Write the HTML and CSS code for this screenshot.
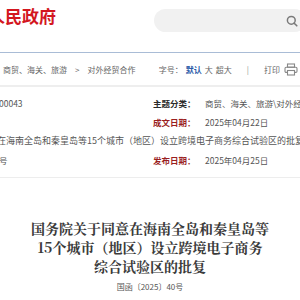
FILE: index.html
```html
<!DOCTYPE html>
<html lang="zh-CN">
<head>
<meta charset="utf-8">
<title>国务院关于同意在海南全岛和秦皇岛等15个城市（地区）设立跨境电子商务综合试验区的批复</title>
<link rel="stylesheet" href="styles.css">
</head>
<body>
<header class="top">
  <div class="logo">人民政府</div>
  <div class="search">
    <svg class="search-icon" viewBox="0 0 12 12" width="12" height="12" aria-hidden="true">
      <circle cx="5.3" cy="5.3" r="3.9" fill="none" stroke="#7a7a7a" stroke-width="1.5"/>
      <line x1="8.2" y1="8.2" x2="10.8" y2="10.8" stroke="#7a7a7a" stroke-width="1.6" stroke-linecap="round"/>
    </svg>
  </div>
</header>
<nav class="bar">
  <div class="crumbs">
    <span>商贸、海关、旅游</span>
    <span class="gt">&gt;</span>
    <span>对外经贸合作</span>
  </div>
  <div class="tools">
    <span>字号：</span><span class="active">默认</span><span>大</span><span>超大</span>
    <span class="sep">|</span>
    <span>打印</span>
    <svg class="printer" viewBox="0 0 14 13" width="14" height="13" aria-hidden="true">
      <rect x="3.5" y="1" width="7" height="3.2" fill="none" stroke="#888" stroke-width="1.1"/>
      <rect x="1" y="4.2" width="12" height="5.2" rx="1.2" fill="none" stroke="#888" stroke-width="1.1"/>
      <rect x="3.5" y="7.5" width="7" height="4.5" fill="#fff" stroke="#888" stroke-width="1.1"/>
    </svg>
  </div>
</nav>
<section class="info">
  <div class="cell left">00043</div>
  <div class="cell right"><b class="lbl dark">主题分类：</b><span class="val">商贸、海关、旅游\对外经贸合作</span></div>
  <div class="cell left"></div>
  <div class="cell right"><b class="lbl">成文日期：</b><span class="val">2025年04月22日</span></div>
  <div class="cell full">在海南全岛和秦皇岛等15个城市（地区）设立跨境电子商务综合试验区的批复</div>
  <div class="cell left">号</div>
  <div class="cell right"><b class="lbl">发布日期：</b><span class="val">2025年04月25日</span></div>
</section>
<article class="doc">
  <h1 class="title">国务院关于同意在海南全岛和秦皇岛等<br>15个城市（地区）设立跨境电子商务<br>综合试验区的批复</h1>
  <p class="docno">国函〔2025〕40号</p>
</article>
</body>
</html>
```
FILE: styles.css
```css
html, body {
  margin: 0;
  padding: 0;
  background: #fff;
}
body {
  width: 300px;
  overflow: hidden;
  font-family: "Noto Sans CJK SC", "Noto Sans", sans-serif;
  color: #555;
}
.top {
  height: 52px;
  display: flex;
  align-items: flex-start;
  border-bottom: 1px solid #a9bcd6;
}
.logo {
  margin: 6px 0 0 -12px;
  font-size: 17px;
  line-height: 20px;
  font-weight: 700;
  color: #d3171f;
  white-space: nowrap;
}
.search {
  margin: 9px -6px 0 auto;
  width: 152px;
  height: 23px;
  border-radius: 12px;
  background: #f1f1f1;
  display: flex;
  align-items: center;
  justify-content: flex-end;
  padding-right: 8px;
  box-sizing: border-box;
}
.search-icon {
  display: block;
}
.bar {
  height: 32px;
  display: flex;
  align-items: center;
  justify-content: space-between;
  border-bottom: 2px solid #eeeeee;
  font-size: 8px;
  color: #666;
  white-space: nowrap;
}
.crumbs {
  display: flex;
  gap: 6px;
  padding-left: 3px;
}
.crumbs .gt {
  margin: 0 2px;
}
.tools {
  display: flex;
  align-items: center;
  gap: 3px;
  margin-right: 2px;
}
.tools .active {
  color: #2a5ba8;
  font-weight: 700;
}
.tools .sep {
  margin: 0 12px;
  color: #999;
}
.printer {
  display: block;
  margin-left: 1px;
}
.info {
  display: grid;
  grid-template-columns: 153px 147px;
  grid-auto-rows: 19px;
  padding-top: 6px;
  padding-bottom: 8px;
  border-bottom: 1px solid #ededed;
  font-size: 8.5px;
  color: #555;
  white-space: nowrap;
  overflow: hidden;
}
.cell {
  display: flex;
  align-items: center;
  overflow: hidden;
}
.cell.left {
  margin-left: -1px;
}
.cell.full {
  grid-column: 1 / 3;
  margin-left: -3px;
  font-size: 9px;
}
.lbl {
  font-weight: 700;
  color: #9a1f1f;
  width: 52px;
  flex: none;
}
.lbl.dark {
  color: #2b2b2b;
}
.doc {
  text-align: center;
  padding-top: 41px;
}
.title {
  margin: 0;
  font-family: "Noto Serif CJK SC", "Noto Sans CJK SC", serif;
  font-size: 14px;
  line-height: 19px;
  font-weight: 700;
  color: #3a3a3a;
}
.docno {
  margin: 5px 0 0;
  font-size: 8px;
  line-height: 12px;
  color: #555;
}
```
